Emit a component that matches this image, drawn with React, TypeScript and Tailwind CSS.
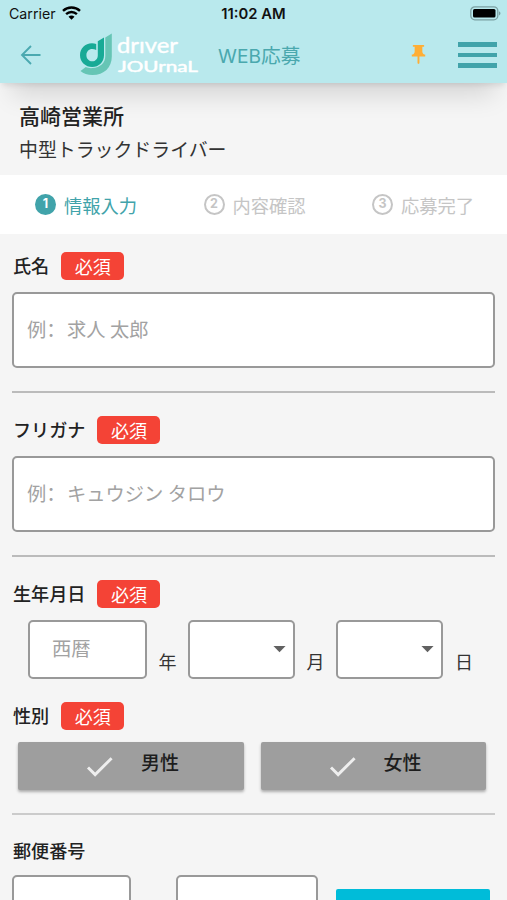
import React from "react";
import { MdPushPin, MdCheck, MdArrowDropDown } from "react-icons/md";

function Required() {
  return (
    <span className="flex h-[28px] w-[63px] items-center justify-center rounded-[5px] bg-[#f44336] text-[18px] font-normal text-white">
      必須
    </span>
  );
}

function Label({ text, required = true }: { text: string; required?: boolean }) {
  return (
    <div className="flex h-[28px] items-center gap-[12px] pl-px text-[18.1px] font-medium text-[#222]">
      <span>{text}</span>
      {required && <Required />}
    </div>
  );
}

function TextBox({ placeholder }: { placeholder: string }) {
  return (
    <div className="mt-3 flex h-[76px] items-center rounded-[5px] border-2 border-[#999] bg-white pb-[2px] pl-[13px] text-[19.3px] whitespace-pre text-[#a2a2a2]">
      <span className="w-[40px] font-['Noto_Sans_CJK_SC',sans-serif]">例：</span>
      {placeholder}
    </div>
  );
}

function Select() {
  return (
    <div className="flex h-[59px] w-[107px] items-center justify-end rounded-[5px] border-2 border-[#999] bg-white">
      <MdArrowDropDown size={29} className="-mr-px mb-[2px] text-[#616161]" />
    </div>
  );
}

function Step({ n, text, active = false }: { n: number; text: string; active?: boolean }) {
  return (
    <div className={"flex w-[168.5px] shrink-0 items-center gap-[8px] " + (active ? "text-[#41a3aa]" : "text-[#c5c5c5]")}>
      <span
        className={
          "flex size-[21px] items-center justify-center rounded-full font-['Inter'] text-[12.5px] font-bold " +
          (active ? "bg-[#41a3aa] text-white" : "border-2 border-[#c5c5c5]")
        }
      >
        {n}
      </span>
      <span className="text-[18.3px] leading-6">{text}</span>
    </div>
  );
}

function Choice({ text }: { text: string }) {
  return (
    <button className="flex h-[48px] w-[225.5px] rounded-[2px] bg-[#9e9e9e] pl-[64px] text-[19px] font-medium text-[#1d1d1d] shadow-[0_2px_3px_rgba(0,0,0,0.3)]">
      <MdCheck size={35} className="mt-[7px] text-[#eee]" />
      <span className="mt-[6px] ml-[24px] leading-[28px]">{text}</span>
    </button>
  );
}

function Logo() {
  return (
    <svg width="120" height="44" viewBox="0 0 120 44">
      <path d="M31.8 .5v23C31.8 34.5 24 42 12.5 42c-5 0-9-1.3-12-4l5.3-4c2 .9 4 1.3 6.7 1.1 7.7-.4 12.8-5 12.8-12V4.5Z" fill="#66c5b5" />
      <path d="M24 4.5v17.7C24 29 18.8 34 12.2 34S0 29 0 22.2s5-12 12-12c1.6 0 2.8.2 4.2.7v6.2c-1.3-.7-2.6-1-4-1-3.4 0-5.8 2.6-5.8 6.1s2.6 6.1 5.9 6.1 5.5-2.6 5.5-6.1V8.3Z" fill="#18aa96" />
      <g fill="#fff" stroke="#fff" strokeLinejoin="round" fontFamily="Lato, sans-serif">
        <text x="37" y="19.6" fontSize="20.5" strokeWidth=".4" textLength="61" lengthAdjust="spacingAndGlyphs">drıver</text>
        <text x="38" y="38.6" fontSize="15" strokeWidth=".5" textLength="80" lengthAdjust="spacingAndGlyphs">JOUrnaL</text>
      </g>
    </svg>
  );
}

export default function App() {
  return (
    <div className="h-[900px] w-[507px] overflow-hidden bg-[#f5f5f5] font-['Noto_Sans_CJK_JP',sans-serif]">
      <header className="relative z-10 h-[83px] bg-[#b9e9ed] shadow-[0_24px_26px_-12px_rgba(0,0,0,0.13),0_4px_6px_-2px_rgba(0,0,0,0.1)]">
        <div className="grid h-[27px] grid-cols-3 items-center font-['Inter',sans-serif] text-[#111]">
          <div className="flex items-center gap-[6px] pl-[9px]">
            <span className="pt-px text-[14.2px]">Carrier</span>
            <svg width="19" height="14" viewBox="0 0 19 14" fill="none" stroke="#000" strokeWidth="2.4">
              <path d="M1 4.9c4.8-4.5 12.2-4.5 17 0M4.1 8.1c3.1-2.9 7.7-2.9 10.8 0" />
              <path d="m9.5 13.8-3-3.1c1.7-1.6 4.3-1.6 6 0Z" fill="#000" stroke="none" />
            </svg>
          </div>
          <span className="pt-px text-center text-[14.8px] font-semibold whitespace-nowrap">11:02 AM</span>
          <div className="flex items-center justify-end pr-[6px]">
            <svg width="31" height="15" viewBox="0 0 31 15">
              <rect x=".8" y=".8" width="27" height="13" rx="4" fill="none" stroke="#7ba0a2" strokeWidth="1.3" />
              <rect x="3" y="3" width="22.5" height="8.6" rx="1.5" />
              <path d="M29 5.2c2 .8 2 3.4 0 4.2Z" fill="#7ba0a2" />
            </svg>
          </div>
        </div>
        <div className="flex h-[56px] items-center pl-[20px]">
          <svg width="22" height="20" viewBox="0 0 22 20" fill="none" stroke="#4ba9b0" strokeWidth="1.9">
            <path d="M20.5 10H2M11 1 2 10l9 9" />
          </svg>
          <span className="ml-[38px]"><Logo /></span>
          <span className="ml-[18px] w-[83px] text-[19.7px] whitespace-nowrap text-[#4aa8ae]">
            <span className="font-['Inter',sans-serif] text-[19.2px]">WEB</span>応募
          </span>
          <MdPushPin size={23} className="mb-[2px] ml-[106px] text-[#ffae35]" />
          <div className="ml-[28px] flex w-[39px] flex-col gap-[6px]">
            <span className="h-[4.5px] bg-[#41a3aa]" />
            <span className="h-[4.5px] bg-[#41a3aa]" />
            <span className="h-[4.5px] bg-[#41a3aa]" />
          </div>
        </div>
      </header>

      {/* Title sits above the header's shadow */}
      <section className="relative z-20 h-[92px] pt-[16px] pl-[19px] text-[#222]">
        <h1 className="text-[21px] leading-[33px] font-medium">高崎営業所</h1>
        <p className="text-[18.9px] leading-[33px] text-[#333]">中型トラックドライバー</p>
      </section>

      <nav className="flex h-[59px] items-center bg-white pl-[35px]">
        <Step n={1} text="情報入力" active />
        <Step n={2} text="内容確認" />
        <Step n={3} text="応募完了" />
      </nav>

      <main className="px-[12px] pt-[18px]">
        <Label text="氏名" />
        <TextBox placeholder="求人 太郎" />
        <hr className="mt-[23px] mb-[23px] border-t-2 border-[#bbb]" />
        <Label text="フリガナ" />
        <TextBox placeholder="キュウジン タロウ" />
        <hr className="mt-[23px] mb-[23px] border-t-2 border-[#bbb]" />
        <Label text="生年月日" />
        <div className="mt-3 flex items-end pl-[16px] text-[18px] text-[#333]">
          <div className="flex h-[59px] w-[119px] items-center rounded-[5px] border-2 border-[#999] bg-white pb-[2px] pl-[22px] text-[19.3px] text-[#a2a2a2]">
            西暦
          </div>
          <span className="w-[41px] pb-[4px] text-center">年</span>
          <Select />
          <span className="w-[41px] pb-[4px] text-center">月</span>
          <Select />
          <span className="w-[41px] pb-[4px] pl-px text-center">日</span>
        </div>
        <div className="mt-[23px]"><Label text="性別" /></div>
        <div className="mt-[12px] flex gap-[17px] pl-[6px]">
          <Choice text="男性" />
          <Choice text="女性" />
        </div>
        <hr className="mt-[23px] mb-[22px] border-t-2 border-[#cbcbcb]" />
        <Label text="郵便番号" required={false} />
        <div className="mt-[10px] flex items-start">
          <div className="h-[59px] w-[119px] rounded-[5px] border-2 border-[#999] bg-white" />
          <div className="ml-[45px] h-[59px] w-[142px] rounded-[5px] border-2 border-[#999] bg-white" />
          <div className="mt-[14px] ml-[18px] h-[48px] w-[154px] rounded-[2px] bg-[#00bcd9]" />
        </div>
      </main>
    </div>
  );
}
